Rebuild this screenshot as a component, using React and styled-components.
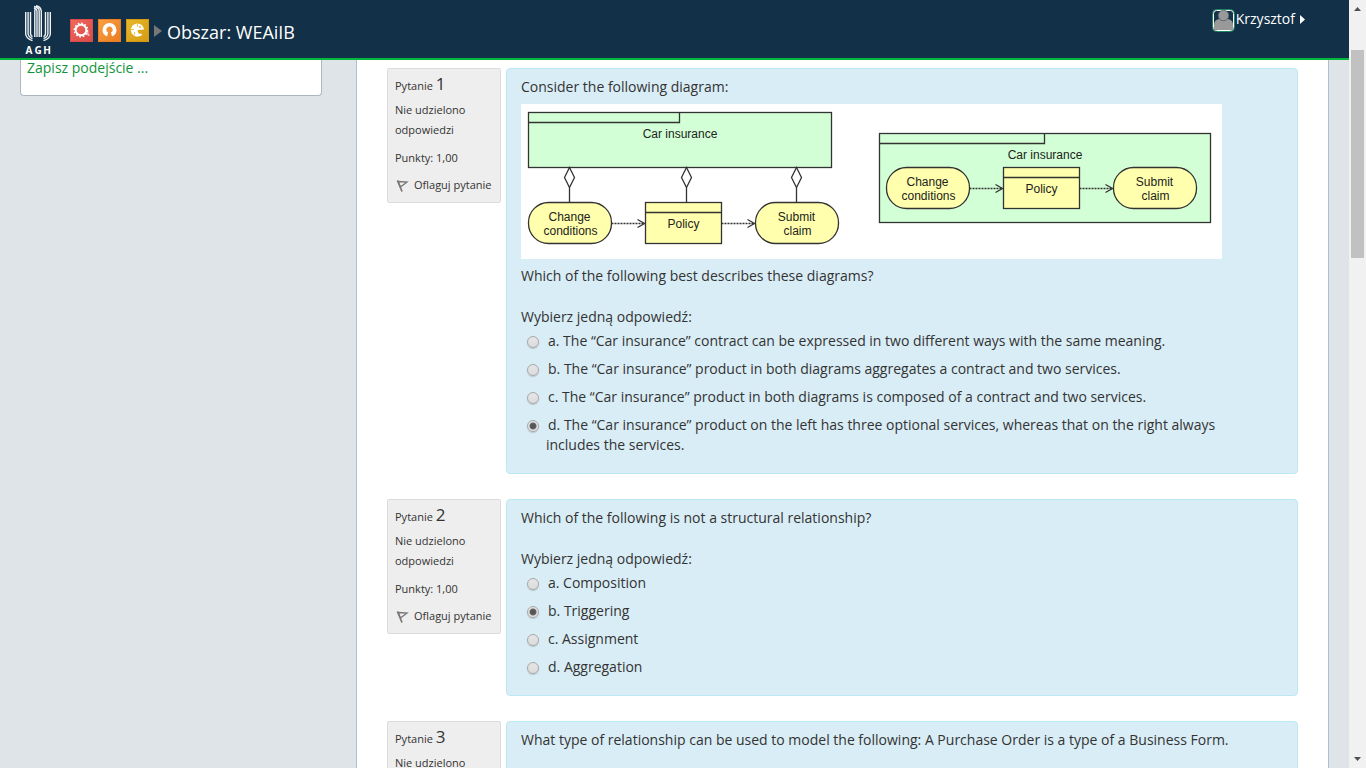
import React from "react";
import styled, { createGlobalStyle } from "styled-components";

const GlobalStyle = createGlobalStyle`
  * { box-sizing: border-box; }
  body {
    margin: 0;
    background: #dfe4e9;
    color: #333;
    font: 14px/20px "Open Sans", "Noto Sans", sans-serif;
  }
`;

const Shell = styled.div`
  display: flex;
  height: 100vh;
  overflow: hidden;
`;
const Page = styled.div`
  flex: 1;
  min-width: 0;
  display: flex;
  flex-direction: column;
`;
const Header = styled.header`
  flex: none;
  display: flex;
  justify-content: space-between;
  align-items: flex-start;
  padding: 5px 43px 1px 24px;
  background: #123047;
  border-bottom: 2px solid #00b83c;
  color: #fff;
`;
const Brand = styled.div`
  display: flex;
  align-items: flex-start;
`;
const Crumbs = styled.nav`
  display: flex;
  align-items: center;
  gap: 5px;
  margin: 14px 0 0 18px;
  height: 24px;
`;
const CrumbLink = styled.a`
  display: block;
  height: 24px;
`;
const Title = styled.h1`
  margin: 2px 0 0;
  font-size: 18px;
  line-height: 24px;
  font-weight: 400;
`;
const UserButton = styled.button`
  display: flex;
  align-items: center;
  margin-top: 3px;
  padding: 0;
  border: 0;
  background: none;
  color: #fff;
  font: inherit;
  height: 24px;
`;
const UserName = styled.span`
  margin: 0 5px 2px 1px;
`;
const Content = styled.div`
  flex: 1;
  min-height: 0;
  overflow: hidden;
  display: flex;
  align-items: flex-start;
  gap: 34px;
  padding: 0 20px;
`;
const Sidebar = styled.aside`
  flex: 0 0 302px;
  padding: 0 6px 19px;
  background: #fff;
  border: 1px solid #b0b6c0;
  border-top: 0;
  border-radius: 0 0 4px 4px;
`;
const FinishLink = styled.a`
  display: block;
  line-height: 16px;
  color: #11953b;
  text-decoration: none;
`;
const Main = styled.main`
  flex: 1;
  min-width: 0;
  display: flex;
  flex-direction: column;
  gap: 25px;
  padding: 8px 30px;
  background: #fff;
  border: 1px solid #afbfd0;
  border-width: 0 1px;
`;
const QuestionRow = styled.section`
  display: flex;
  align-items: flex-start;
  gap: 5px;
`;
const Info = styled.div`
  flex: 0 0 114px;
  padding: 5px 7px 7px;
  background: #eee;
  border: 1px solid #dcdcdc;
  border-radius: 2px;
  font-size: 11px;
`;
const InfoTitle = styled.h2`
  margin: 0 0 6px;
  font-size: 11px;
  line-height: 20px;
  font-weight: 400;
  height: 20px;
`;
const Number = styled.span`
  font-size: 17px;
  font-weight: 500;
`;
const InfoText = styled.p`
  margin: 0 0 8px;
`;
const FlagButton = styled.button`
  display: flex;
  align-items: center;
  gap: 4px;
  margin: -1px 0 0;
  padding: 0 0 0 1px;
  border: 0;
  background: none;
  color: inherit;
  font: inherit;
  white-space: nowrap;
`;
const Card = styled.div`
  flex: 1;
  min-width: 0;
  padding: 8px 14px 18px;
  background: #d9edf6;
  border: 1px solid #bce8f1;
  border-radius: 4px;
`;
const Prompt = styled.p`
  margin: 0;
`;
const Diagram = styled.svg`
  display: block;
  margin: 7px 0;
  max-width: 100%;
  background: #fff;
  font: 12px "Liberation Sans", Arial, sans-serif;
`;
const Answers = styled.fieldset`
  margin: 21px 0 0;
  padding: 0;
  border: 0;
  min-width: 0;
`;
const Legend = styled.legend`
  padding: 0;
`;
const Options = styled.div`
  display: flex;
  flex-direction: column;
  gap: 8px;
  margin-top: 4px;
  max-width: 700px;
`;
const Option = styled.label`
  display: flex;
  align-items: flex-start;
  gap: 7px;
  padding-left: 6px;
`;
const OptionText = styled.span`
  text-indent: 2px;
`;
const Radio = styled.input`
  appearance: none;
  flex: none;
  width: 12px;
  height: 12px;
  margin: 5px 0 0;
  border: 1px solid #a8a8a8;
  border-radius: 50%;
  background: linear-gradient(#e6e6e6, #dcdcdc);
  box-shadow: 0 1px 1px #b8c4ca;
  &:checked {
    background: radial-gradient(circle, #555 0 2px, #666 3px, #e4e4e4 4px);
  }
`;
const Scrollbar = styled.div`
  flex: 0 0 17px;
  display: flex;
  flex-direction: column;
  align-items: center;
  background: #f1f1f1;
`;
const ScrollArrow = styled.svg`
  flex: none;
  display: block;
`;
const Track = styled.div`
  flex: 1;
  width: 13px;
  padding-top: 33px;
`;
const Thumb = styled.div`
  height: 208px;
  background: #c1c1c1;
`;

function AghLogo() {
  return (
    <svg width="28" height="52" viewBox="24 5 28 52" role="img" aria-label="AGH">
      <g fill="none" stroke="#eef2f5" strokeWidth="1.4">
        <path d="M25.700 12V34Q26 38.500 32.500 40.700M28.100 12V34Q28.500 37 32.500 38.700M30.500 12V34Q31 36 32.500 36.700" />
        <path d="M50.300 12V34Q50 38.500 43.500 40.700M47.900 12V34Q47.500 37 43.500 38.700M45.500 12V34Q45 36 43.500 36.700" />
        <path d="M34.800 37V9.500M37 37V11Q36.800 9 34 8M39.200 37V11Q39 7.500 34 6.500M41.300 37V11.500Q41 6.500 36 5.700" />
      </g>
      <g fill="#fff" fontSize="10" fontWeight="700" textAnchor="middle">
        <text x="29" y="54">A</text>
        <text x="38" y="54">G</text>
        <text x="47" y="54">H</text>
      </g>
    </svg>
  );
}

function CourseIcon({ kind }) {
  const colors = { gear: ["#f06a5e", "#d94a48"], arch: ["#faa044", "#ea7d20"], pie: ["#eab92c", "#d49a12"] }[kind];
  return (
    <svg width="23" height="24" viewBox="0 0 23 24">
      <defs>
        <linearGradient id={kind} x2="1" y2="1">
          <stop stopColor={colors[0]} />
          <stop offset="1" stopColor={colors[1]} />
        </linearGradient>
      </defs>
      <rect x="0.5" y="0.5" width="22" height="22" fill={`url(#${kind})`} stroke={colors[1]} />
      {kind === "gear" && (
        <g fill="none">
          <path d="M16.500 9.500L20 17H18L16.500 14.500L14 16Z" fill="#f0b5b0" />
          <circle cx="11" cy="11" r="5.300" stroke="#fff" strokeWidth="1.900" />
          <circle cx="11" cy="11" r="6.700" stroke="#fff" strokeWidth="1.400" strokeDasharray="1.750 1.750" />
        </g>
      )}
      {kind === "arch" && <path d="M9 17.500L10 13.500A3.200 3.200 0 1 1 13 13.500L14 17.500Q18.500 15.500 18.500 11A7 7 0 0 0 4.500 11Q4.500 15.500 9 17.500Z" fill="#fff" />}
      {kind === "pie" && (
        <g>
          <path d="M11.500 11L18 10.500A6.600 6.600 0 1 0 12 17.600Q15 17.500 16.500 15L12.500 14.500Z" fill="#fff" />
          <path d="M11.500 4V8M5 10.500H8M8.500 13V16" stroke={colors[0]} strokeWidth="0.8" />
          <circle cx="14" cy="8" r="1" fill={colors[0]} />
        </g>
      )}
    </svg>
  );
}

function Avatar() {
  return (
    <svg width="23" height="23" viewBox="0 0 23 23">
      <rect x="0.5" y="0.5" width="22" height="22" rx="4" fill="#123047" stroke="#1b8a62" />
      <rect x="1.5" y="1.500" width="20" height="20" rx="3" fill="#183247" stroke="#fff" />
      <path d="M2 21V16Q2 11 7 10H16Q21 11 21 16V21Z" fill="#999" />
      <circle cx="11.500" cy="6.500" r="5.300" fill="#999" stroke="#4c5c68" strokeWidth="0.8" />
    </svg>
  );
}

function Flag() {
  return (
    <svg width="14" height="14" viewBox="0 0 14 14" fill="none" stroke="#777">
      <path d="M1.500 2.500L6 13.500" strokeWidth="1.700" />
      <path d="M2 3.500L11 4L4.500 9Z" strokeWidth="1.300" />
    </svg>
  );
}

function Process({ x, y, lines }) {
  return (
    <g>
      <rect x={x} y={y} width="83" height="41" rx="20" fill="#ffffad" stroke="#333" strokeWidth="1.300" />
      <g fill="#222" textAnchor="middle">
        <text x={x + 41} y={y + 18}>{lines[0]}</text>
        <text x={x + 42} y={y + 32}>{lines[1]}</text>
      </g>
    </g>
  );
}

function Flow({ x, y }) {
  return (
    <g>
      <Process x={x} y={y} lines={["Change", "conditions"]} />
      <Process x={x + 227} y={y} lines={["Submit", "claim"]} />
      <rect x={x + 117} y={y} width="76" height="41" fill="#ffffad" stroke="#333" strokeWidth="1.300" />
      <g fill="none" stroke="#333" strokeWidth="1.300">
        <path d={`M${x + 117} ${y + 10}h76`} />
        <path d={`M${x + 83} ${y + 21}h33M${x + 193} ${y + 21}h33`} strokeDasharray="2 1" />
        <path d={`M${x + 109} ${y + 17}l7 4l-7 4M${x + 219} ${y + 17}l7 4l-7 4`} />
      </g>
      <text x={x + 155} y={y + 25} textAnchor="middle" fill="#222">Policy</text>
    </g>
  );
}

function Product({ x, y, width, height, tab }) {
  return (
    <g>
      <rect x={x} y={y} width={width} height={height} fill="#d3ffd6" stroke="#333" strokeWidth="1.300" />
      <path d={`M${x} ${y + 10}h${tab}v-10`} fill="none" stroke="#333" strokeWidth="1.300" />
      <text x={x + width / 2} y={y + 25} textAnchor="middle" fill="#222">Car insurance</text>
    </g>
  );
}

function InsuranceDiagram() {
  return (
    <Diagram width="701" height="155" viewBox="0.5 0.5 701 155" role="img" aria-label="Car insurance">
      <Product x={8} y={9} width={303} height={55} tab={151} />
      {[49, 166, 276].map((x) => (
        <path key={x} d={`M${x} 64l5 10l-5 10l-5-10zM${x} 84v15`} fill="#fff" stroke="#333" strokeWidth="1.300" />
      ))}
      <Flow x={8} y={99} />
      <Product x={359} y={30} width={331} height={89} tab={165} />
      <Flow x={366} y={64} />
    </Diagram>
  );
}

function Question({ number, children, options, selected }) {
  return (
    <QuestionRow>
      <Info>
        <InfoTitle>Pytanie <Number>{number}</Number></InfoTitle>
        <InfoText>Nie udzielono odpowiedzi</InfoText>
        <InfoText>Punkty: 1,00</InfoText>
        <FlagButton type="button"><Flag />Oflaguj pytanie</FlagButton>
      </Info>
      <Card>
        {children}
        <Answers>
          <Legend>Wybierz jedną odpowiedź:</Legend>
          <Options>
            {options.map((text, i) => (
              <Option key={text}>
                <Radio type="radio" name={`q${number}`} defaultChecked={i === selected} />
                <OptionText>{`${"abcd"[i]}. ${text}`}</OptionText>
              </Option>
            ))}
          </Options>
        </Answers>
      </Card>
    </QuestionRow>
  );
}

export default function App() {
  return (
    <Shell>
      <GlobalStyle />
      <Page>
        <Header>
          <Brand>
            <AghLogo />
            <Crumbs>
              <CrumbLink href="#gear" aria-label="Kurs 1"><CourseIcon kind="gear" /></CrumbLink>
              <CrumbLink href="#arch" aria-label="Kurs 2"><CourseIcon kind="arch" /></CrumbLink>
              <CrumbLink href="#pie" aria-label="Kurs 3"><CourseIcon kind="pie" /></CrumbLink>
              <svg width="8" height="12" viewBox="0 0 8 12"><path d="M0 0L8 6L0 12Z" fill="#777" /></svg>
              <Title>Obszar: WEAiIB</Title>
            </Crumbs>
          </Brand>
          <UserButton type="button">
            <Avatar />
            <UserName>Krzysztof</UserName>
            <svg width="6" height="10" viewBox="0 0 6 10"><path d="M0 0L5 4.500L0 9Z" fill="#fff" /></svg>
          </UserButton>
        </Header>
        <Content>
          <Sidebar><FinishLink href="#finish">Zapisz podejście ...</FinishLink></Sidebar>
          <Main>
            <Question
              number={1}
              selected={3}
              options={[
                "The “Car insurance” contract can be expressed in two different ways with the same meaning.",
                "The “Car insurance” product in both diagrams aggregates a contract and two services.",
                "The “Car insurance” product in both diagrams is composed of a contract and two services.",
                "The “Car insurance” product on the left has three optional services, whereas that on the right always includes the services.",
              ]}
            >
              <Prompt>Consider the following diagram:</Prompt>
              <InsuranceDiagram />
              <Prompt>Which of the following best describes these diagrams?</Prompt>
            </Question>
            <Question number={2} selected={1} options={["Composition", "Triggering", "Assignment", "Aggregation"]}>
              <Prompt>Which of the following is not a structural relationship?</Prompt>
            </Question>
            <Question number={3} options={["Composition", "Specialization", "Assignment", "Aggregation"]}>
              <Prompt>What type of relationship can be used to model the following: A Purchase Order is a type of a Business Form.</Prompt>
            </Question>
          </Main>
        </Content>
      </Page>
      <Scrollbar aria-hidden="true">
        <ScrollArrow width="17" height="17"><path d="M5 11L8.500 7L12 11Z" fill="#505050" /></ScrollArrow>
        <Track><Thumb /></Track>
        <ScrollArrow width="17" height="17"><path d="M5 6L8.500 10L12 6Z" fill="#505050" /></ScrollArrow>
      </Scrollbar>
    </Shell>
  );
}
